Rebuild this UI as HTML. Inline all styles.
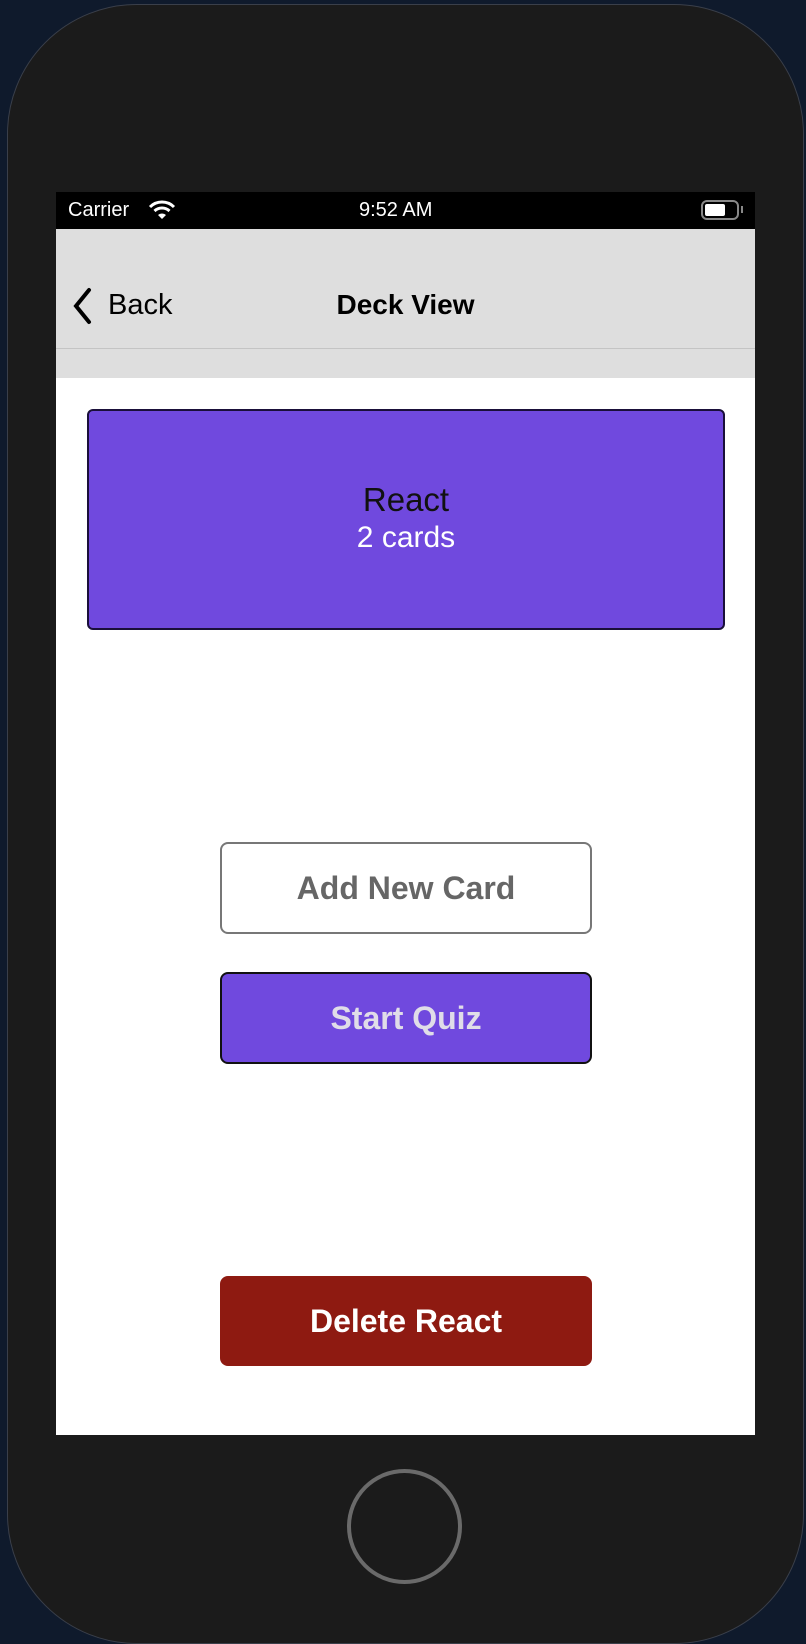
<!DOCTYPE html>
<html><head><style>
*{margin:0;padding:0;box-sizing:border-box}
body{width:806px;height:1618px;background:#0f1a2c;position:relative;overflow:hidden;font-family:"Liberation Sans",sans-serif}
.phone{position:absolute;left:7px;top:4px;width:797px;height:1640px;background:#1b1b1b;border-radius:130px;border:1px solid #3a3f4a}
.screen{position:absolute;left:56px;top:192px;width:699px;height:1243px;background:#fff}
.sb{position:absolute;left:0;top:0;width:699px;height:37px;background:#000;color:#fff;font-size:20px}
.nav{position:absolute;left:0;top:37px;width:699px;height:149px;background:#dedede}
.line{position:absolute;left:0;top:119px;width:699px;height:1px;background:#c4c4c4}
.abs{position:absolute}
.btn{position:absolute;left:164px;width:372px;border-radius:8px;display:flex;align-items:center;justify-content:center;font-weight:bold;font-size:32px}
</style></head><body>
<div class="phone"></div>
<div class="screen">
 <div class="sb">
  <span class="abs" style="left:12px;top:7px">Carrier</span>
  <svg class="abs" style="left:92px;top:8px" width="28" height="20" viewBox="0 0 28 20"><path d="M2 7a17 17 0 0 1 24 0" stroke="#fff" stroke-width="3" fill="none"/><path d="M6.5 11a11 11 0 0 1 15 0" stroke="#fff" stroke-width="3" fill="none"/><path d="M14 19l-4-4a6 6 0 0 1 8 0z" fill="#fff"/></svg>
  <span class="abs" style="left:303px;top:7px">9:52 AM</span>
  <div class="abs" style="left:645px;top:8px;width:38px;height:20px;border:2px solid #888;border-radius:6px"><div style="margin:2px;width:20px;height:12px;background:#fff;border-radius:2px"></div></div>
  <div class="abs" style="left:685px;top:14px;width:2px;height:7px;background:#888"></div>
 </div>
 <div class="nav">
  <svg class="abs" style="left:16px;top:58px" width="20" height="38" viewBox="0 0 20 38"><path d="M17 3L4 19l13 16" stroke="#000" stroke-width="4" fill="none" stroke-linecap="round"/></svg>
  <span class="abs" style="left:52px;top:60px;font-size:29px">Back</span>
  <span class="abs" style="left:0;width:699px;text-align:center;top:60px;font-size:28px;font-weight:bold">Deck View</span>
  <div class="line"></div>
 </div>
 <div class="abs" style="left:31px;top:217px;width:638px;height:221px;background:#7049de;border:2px solid #1a0f3a;border-radius:6px;text-align:center">
  <div style="margin-top:70px;font-size:33px;color:#111">React</div>
  <div style="font-size:30px;color:#fff;margin-top:2px">2 cards</div>
 </div>
 <div class="btn" style="top:650px;height:92px;border:2px solid #777;color:#666;background:#fff">Add New Card</div>
 <div class="btn" style="top:780px;height:92px;border:2px solid #111;background:#7049de;color:#e0dde8">Start Quiz</div>
 <div class="btn" style="top:1084px;height:90px;background:#8e1a11;color:#fff">Delete React</div>
</div>
<div class="abs" style="left:347px;top:1469px;width:115px;height:115px;border:4px solid #6a6a6a;border-radius:50%"></div>
</body></html>
